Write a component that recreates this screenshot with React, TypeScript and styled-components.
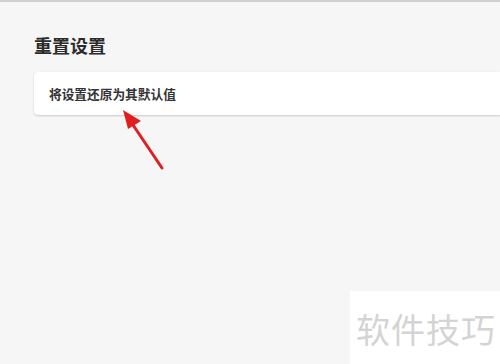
import React from "react";
import styled, { createGlobalStyle } from "styled-components";

const GlobalStyle = createGlobalStyle`
  html, body {
    margin: 0;
    padding: 0;
    background: #f6f6f6;
  }
  body {
    font-family: "Noto Sans CJK SC", "Liberation Sans", sans-serif;
  }
`;

const Page = styled.div`
  position: relative;
  width: 500px;
  height: 364px;
  overflow: hidden;
  background: #f6f6f6;
  border-top: 2px solid #cfcfcf;
  box-sizing: border-box;
  padding: 30px 0 0 34px;
`;

const Title = styled.h2`
  margin: 0;
  font-size: 18px;
  line-height: 26px;
  font-weight: 700;
  color: #2b2b2b;
`;

const Card = styled.div`
  margin-top: 14px;
  height: 43px;
  display: flex;
  align-items: center;
  padding-left: 15px;
  background: #fff;
  border-radius: 4px 0 0 4px;
  box-shadow: 0 1px 2px rgba(0, 0, 0, 0.18), 0 0 1px rgba(0, 0, 0, 0.06);
`;

const CardText = styled.span`
  font-size: 12.7px;
  font-weight: 700;
  color: #333;
`;

const Arrow = styled.svg`
  position: absolute;
  left: 0;
  top: 0;
  pointer-events: none;
`;

const Watermark = styled.div`
  position: absolute;
  left: 350px;
  top: 289px;
  width: 150px;
  height: 75px;
  background: #fff;
  display: flex;
  align-items: center;
  justify-content: center;
  font-size: 34px;
  letter-spacing: 1px;
  color: #d4d4d4;
  font-family: "Noto Sans CJK SC", sans-serif;
  padding-left: 2px;
  box-sizing: border-box;
`;

export default function App() {
  return (
    <>
      <GlobalStyle />
      <Page>
        <Title>重置设置</Title>
        <Card>
          <CardText>将设置还原为其默认值</CardText>
        </Card>
        <Arrow width="500" height="364" viewBox="0 0 500 364">
          <line x1="162" y1="166" x2="131" y2="120" stroke="#e02020" strokeWidth="3" strokeLinecap="round" />
          <polygon points="123,108 141,119 128,127" fill="#e02020" />
        </Arrow>
        <Watermark>软件技巧</Watermark>
      </Page>
    </>
  );
}
